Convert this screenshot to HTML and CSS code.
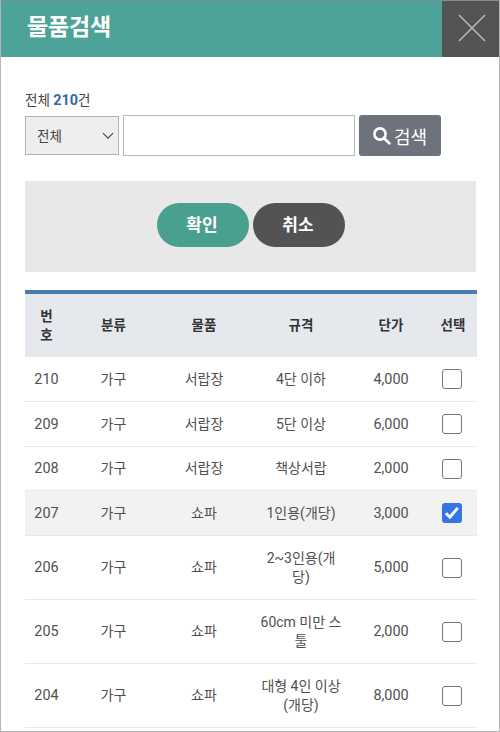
FILE: index.html
```
<!DOCTYPE html>
<html lang="ko">
<head>
<meta charset="utf-8">
<title>물품검색</title>
<link rel="stylesheet" href="styles.css">
</head>
<body>
<div class="popup">
  <header class="header">
    <h1>물품검색</h1>
    <button class="close" aria-label="닫기"><svg width="28" height="28" viewBox="0 0 28 28"><path d="M1 1L27 27M27 1L1 27"/></svg></button>
  </header>
  <main class="content">
    <p class="total">전체 <strong>210</strong>건</p>
    <div class="search">
      <div class="select"><span>전체</span><svg width="12" height="8" viewBox="0 0 12 8"><path d="M1 1.2L6 6.2L11 1.2"/></svg></div>
      <input class="keyword" type="text" aria-label="검색어">
      <button class="submit"><svg width="18" height="18" viewBox="0 0 18 18"><circle cx="7" cy="7" r="5.6"/><path d="M11.2 11.2L16.4 16.4"/></svg><span>검색</span></button>
    </div>
    <div class="actions"><button class="pill ok">확인</button><button class="pill cancel">취소</button></div>
    <table>
      <colgroup><col class="c-no"><col class="c-kind"><col class="c-item"><col class="c-spec"><col class="c-price"><col class="c-check"></colgroup>
      <thead><tr><th>번<br>호</th><th>분류</th><th>물품</th><th>규격</th><th>단가</th><th>선택</th></tr></thead>
      <tbody>
        <tr><td class="num">210</td><td>가구</td><td>서랍장</td><td>4단 이하</td><td class="num">4,000</td><td><span class="box"></span></td></tr>
        <tr><td class="num">209</td><td>가구</td><td>서랍장</td><td>5단 이상</td><td class="num">6,000</td><td><span class="box"></span></td></tr>
        <tr class="short"><td class="num">208</td><td>가구</td><td>서랍장</td><td>책상서랍</td><td class="num">2,000</td><td><span class="box"></span></td></tr>
        <tr class="selected"><td class="num">207</td><td>가구</td><td>쇼파</td><td>1인용(개당)</td><td class="num">3,000</td><td><span class="box checked"><svg width="20" height="20" viewBox="0 0 20 20"><path d="M3.9 10.2L7.9 14.1L15.8 4.9"/></svg></span></td></tr>
        <tr class="tall"><td class="num">206</td><td>가구</td><td>쇼파</td><td>2~3인용(개<br>당)</td><td class="num">5,000</td><td><span class="box"></span></td></tr>
        <tr class="tall"><td class="num">205</td><td>가구</td><td>쇼파</td><td>60cm 미만 스<br>툴</td><td class="num">2,000</td><td><span class="box"></span></td></tr>
        <tr class="tall"><td class="num">204</td><td>가구</td><td>쇼파</td><td>대형 4인 이상<br>(개당)</td><td class="num">8,000</td><td><span class="box"></span></td></tr>
      </tbody>
    </table>
  </main>
</div>
</body>
</html>
```
FILE: styles.css
```
* { box-sizing: border-box; }
body { margin: 0; font-family: Roboto, "Noto Sans CJK KR", sans-serif; font-size: 14px; color: #505050; background: #fff; }
button { border: 0; padding: 0; font-family: inherit; }
.popup { height: 732px; border: 1px solid #b5b5b5; border-top-color: #80908d; overflow: hidden; }
.header { display: flex; justify-content: space-between; height: 56px; margin-right: -1px; margin-left: -1px; background: #4da397; }
h1 { margin: 0; padding-left: 27px; font-size: 23px; line-height: 53px; font-weight: 700; color: #fff; letter-spacing: -0.2px; }
.close { display: flex; align-items: center; justify-content: center; width: 58px; padding: 0 0 3px 2px; background: #545454; }
.close path { stroke: #bababa; stroke-width: 1.5; fill: none; }
.content { padding: 33px 23px 0 24px; }
.total { margin: 0; height: 25px; line-height: 20px; color: #444; font-size: 13.5px; }
.total strong { color: #356b9d; font-size: 14.4px; }
.search { display: flex; gap: 4px; align-items: center; height: 41px; }
.select { display: flex; align-items: center; justify-content: space-between; width: 94px; height: 39px; padding: 0 4px 2px 11px; border: 1px solid #b2b2b2; background: #eee; color: #444; font-size: 13.5px; }
.select svg { margin-top: 2px; }
.select path { fill: none; stroke: #484848; stroke-width: 1.2; }
.keyword { width: 232px; height: 41px; border: 1px solid #b8b8b8; padding: 0 8px; background: #fff; }
.submit { display: flex; align-items: center; justify-content: center; gap: 3px; width: 82px; height: 41px; border-radius: 3px; background: #6d727d; color: #fff; font-size: 18px; }
.submit svg { fill: none; stroke: #fff; stroke-width: 2.7; stroke-linecap: round; }
.actions { display: flex; justify-content: center; align-items: center; gap: 4px; height: 91px; margin-top: 25px; padding: 0 0 3px; background: #e8e8e8; }
.pill { width: 92px; height: 44px; border-radius: 22px; color: #fff; font-size: 17px; font-weight: 700; padding: 0 1px 3px 0; }
.ok { background: #499f90; }
.cancel { background: #535353; }
table { width: 452px; margin-top: 18px; table-layout: fixed; border-collapse: separate; border-spacing: 0; text-align: center; }
.c-no { width: 43px; }
.c-kind { width: 91px; }
.c-item { width: 90px; }
.c-spec { width: 104px; }
.c-price { width: 76px; }
.c-check { width: 48px; }
th, td { padding: 0; line-height: 19px; vertical-align: middle; }
th { height: 67px; border-top: 4px solid #467dae; background: #e5e9ed; color: #333; font-size: 13.5px; font-weight: 700; }
td { height: 45px; border-bottom: 1px solid #e9e9e9; }
.num { font-size: 14.4px; }
.short td { height: 44px; }
.tall td { height: 64px; }
.selected td { background: #f2f2f2; }
td:last-child { padding-right: 2px; }
.box { display: block; width: 20px; height: 20px; margin: 0 auto; border: 1.5px solid #777; border-radius: 3px; background: #fff; }
.checked { border: 0; background: #3475e5; }
.checked svg { display: block; }
.checked path { fill: none; stroke: #fff; stroke-width: 2.9; }
```
